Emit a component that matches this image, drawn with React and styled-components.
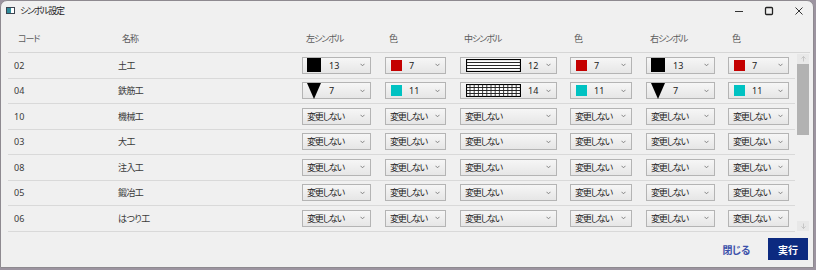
import React from "react";
import styled, { createGlobalStyle } from "styled-components";

const GlobalStyle = createGlobalStyle`
  html, body { margin: 0; padding: 0; }
  body {
    background: #9c94a0;
    font-family: "Noto Sans", "Noto Sans CJK JP", sans-serif;
    font-feature-settings: "palt";
  }
`;

const Window = styled.div`
  box-sizing: border-box;
  width: 814px;
  height: 268px;
  background: #f0f0f0;
  border: 1px solid #8e8a90;
  border-radius: 7px 7px 0 0;
  display: flex;
  flex-direction: column;
  overflow: hidden;
`;

const TitleBar = styled.div`
  height: 21px;
  display: flex;
  align-items: center;
  padding: 0 0 2px 5px;
  box-sizing: border-box;
`;

const TitleText = styled.span`
  margin-left: 5px;
  font-size: 9px;
  letter-spacing: -1.3px;
  color: #1e1e1e;
`;

const Controls = styled.div`
  margin-left: auto;
  display: flex;
  align-items: center;
  gap: 20px;
  padding-right: 9px;
`;

const Table = styled.div`
  margin: 0 3px 0 7px;
  display: flex;
  flex-direction: column;
`;

const cols = "104px 184px 83px 75px 110px 76px 82px 73px";

const HeaderRow = styled.div`
  box-sizing: border-box;
  height: 31px;
  display: grid;
  grid-template-columns: ${cols};
  align-items: center;
  padding-top: 3px;
  border-bottom: 1px solid #d6d6d6;
`;

const HeadCell = styled.div`
  padding-left: 10px;
  font-size: 9px;
  letter-spacing: -1px;
  color: #5c5c5c;
`;

const BodyWrap = styled.div`
  display: flex;
`;

const Rows = styled.div`
  width: 787px;
  display: flex;
  flex-direction: column;
`;

const Row = styled.div`
  box-sizing: border-box;
  height: 25.5px;
  display: grid;
  grid-template-columns: ${cols};
  align-items: center;
  border-bottom: 1px solid #d9d9d9;
`;

const Cell = styled.div`
  padding-left: 6px;
  font-size: 9px;
  letter-spacing: ${(p) => (p.$jp ? "-0.6px" : "0")};
  color: #3a3a3a;
  display: flex;
  align-items: center;
`;

const Combo = styled.div`
  box-sizing: border-box;
  width: ${(p) => p.$w}px;
  height: 17px;
  border: 1px solid #b4b4b4;
  background: linear-gradient(#f6f6f6, #e6e6e6);
  display: flex;
  align-items: center;
  padding: 0 5px 0 4px;
  font-size: 9px;
  color: #222;
  letter-spacing: 0;
`;

const ComboLabel = styled.span`
  letter-spacing: -1.2px;
  white-space: nowrap;
`;

const Gap = styled.span`
  display: inline-block;
  width: ${(p) => p.$w}px;
  flex: none;
`;

const ChevronWrap = styled.span`
  margin-left: auto;
  display: flex;
  align-items: center;
`;

const Swatch = styled.span`
  display: inline-block;
  width: ${(p) => p.$s}px;
  height: ${(p) => p.$s}px;
  background: ${(p) => p.$c};
  flex: none;
`;

const Scrollbar = styled.div`
  margin: 1px 0 0 2px;
  width: 12px;
  height: 177px;
  display: flex;
  flex-direction: column;
  background: #f0f0f0;
`;

const ScrollArrow = styled.div`
  height: 10px;
  background: #e8e8e8;
  display: flex;
  align-items: center;
  justify-content: center;
`;

const Thumb = styled.div`
  height: 71px;
  background: #b2b2b2;
`;

const Track = styled.div`
  flex: 1;
`;

const Footer = styled.div`
  flex: 1;
  display: flex;
  align-items: center;
  justify-content: flex-end;
  gap: 10px;
  padding-right: 5px;
`;

const LinkButton = styled.button`
  border: none;
  background: transparent;
  font-family: inherit;
  font-size: 10px;
  font-weight: 600;
  letter-spacing: -0.8px;
  color: #3d51aa;
  padding: 0 8px;
  height: 22px;
`;

const PrimaryButton = styled.button`
  border: none;
  width: 40px;
  height: 22px;
  background: #0c2a80;
  color: #fff;
  font-family: inherit;
  font-size: 10px;
  font-weight: 700;
  padding: 0;
`;

const Chevron = () => (
  <ChevronWrap>
    <svg width="5" height="4" viewBox="0 0 5 4">
      <polyline points="0.5,0.8 2.5,2.8 4.5,0.8" fill="none" stroke="#777" strokeWidth="0.9" />
    </svg>
  </ChevronWrap>
);

const Sym = ({ kind }) =>
  kind === "square" ? (
    <Swatch $s={14} $c="#000" />
  ) : (
    <svg width="14" height="16" viewBox="0 0 14 16" style={{ flex: "none" }}>
      <polygon points="0,0 14,0 7,16" fill="#000" />
    </svg>
  );

const Pattern = ({ kind }) => {
  const hs = [3.5, 6.5, 9.5];
  const vs = [];
  for (let x = 4; x < 54; x += 4.2) vs.push(x);
  return (
    <svg width="55" height="13" viewBox="0 0 55 13" style={{ flex: "none" }}>
      <rect x="0.5" y="0.5" width="54" height="12" fill="#fff" stroke="#000" strokeWidth="1.2" />
      {hs.map((y) => (
        <line key={y} x1="0.5" x2="54.5" y1={y} y2={y} stroke="#111" strokeWidth="0.9" />
      ))}
      {kind === "grid" &&
        vs.map((x) => (
          <line key={x} x1={x} x2={x} y1="0.5" y2="12.5" stroke="#222" strokeWidth="0.9" />
        ))}
    </svg>
  );
};

const Unchanged = ({ w }) => (
  <Combo $w={w}>
    <ComboLabel>変更しない</ComboLabel>
    <Chevron />
  </Combo>
);

const SymCombo = ({ w, v }) =>
  v ? (
    <Combo $w={w}>
      <Sym kind={v.sym} />
      <Gap $w={8} />
      <span>{v.n}</span>
      <Chevron />
    </Combo>
  ) : (
    <Unchanged w={w} />
  );

const ColorCombo = ({ w, v }) =>
  v ? (
    <Combo $w={w}>
      <Gap $w={1} />
      <Swatch $s={11} $c={v.color} />
      <Gap $w={7} />
      <span>{v.n}</span>
      <Chevron />
    </Combo>
  ) : (
    <Unchanged w={w} />
  );

const MidCombo = ({ w, v }) =>
  v ? (
    <Combo $w={w}>
      <Gap $w={1} />
      <Pattern kind={v.pat} />
      <Gap $w={7} />
      <span>{v.n}</span>
      <Chevron />
    </Combo>
  ) : (
    <Unchanged w={w} />
  );

const RED = "#c40000";
const CYAN = "#00c2c2";

const rows = [
  {
    code: "02",
    name: "土工",
    l: { sym: "square", n: 13 },
    lc: { color: RED, n: 7 },
    m: { pat: "h", n: 12 },
    mc: { color: RED, n: 7 },
    r: { sym: "square", n: 13 },
    rc: { color: RED, n: 7 },
  },
  {
    code: "04",
    name: "鉄筋工",
    l: { sym: "tri", n: 7 },
    lc: { color: CYAN, n: 11 },
    m: { pat: "grid", n: 14 },
    mc: { color: CYAN, n: 11 },
    r: { sym: "tri", n: 7 },
    rc: { color: CYAN, n: 11 },
  },
  { code: "10", name: "機械工" },
  { code: "03", name: "大工" },
  { code: "08", name: "注入工" },
  { code: "05", name: "鍛冶工" },
  { code: "06", name: "はつり工" },
];

const headers = ["コード", "名称", "左シンボル", "色", "中シンボル", "色", "右シンボル", "色"];

export default function App() {
  return (
    <>
      <GlobalStyle />
      <Window>
        <TitleBar>
          <svg width="9" height="7" viewBox="0 0 9 7">
            <rect x="0.5" y="0.5" width="8" height="6" fill="#fff" stroke="#3c4450" />
            <rect x="1" y="1" width="4" height="5" fill="#2f8a9a" />
          </svg>
          <TitleText>シンボル設定</TitleText>
          <Controls>
            <svg width="10" height="10" viewBox="0 0 10 10">
              <line x1="1" x2="9" y1="5.5" y2="5.5" stroke="#333" strokeWidth="1" />
            </svg>
            <svg width="10" height="10" viewBox="0 0 10 10">
              <rect x="1.5" y="1.5" width="7" height="7" rx="1" fill="none" stroke="#222" strokeWidth="1.3" />
            </svg>
            <svg width="10" height="10" viewBox="0 0 10 10">
              <path d="M1.5 1.5 L8.5 8.5 M8.5 1.5 L1.5 8.5" stroke="#333" strokeWidth="1" />
            </svg>
          </Controls>
        </TitleBar>
        <Table>
          <HeaderRow>
            {headers.map((h, i) => (
              <HeadCell key={i}>{h}</HeadCell>
            ))}
          </HeaderRow>
          <BodyWrap>
            <Rows>
              {rows.map((r) => (
                <Row key={r.code}>
                  <Cell>{r.code}</Cell>
                  <Cell $jp>{r.name}</Cell>
                  <Cell>
                    <SymCombo w={69} v={r.l} />
                  </Cell>
                  <Cell>
                    <ColorCombo w={61} v={r.lc} />
                  </Cell>
                  <Cell>
                    <MidCombo w={97} v={r.m} />
                  </Cell>
                  <Cell>
                    <ColorCombo w={62} v={r.mc} />
                  </Cell>
                  <Cell>
                    <SymCombo w={69} v={r.r} />
                  </Cell>
                  <Cell>
                    <ColorCombo w={61} v={r.rc} />
                  </Cell>
                </Row>
              ))}
            </Rows>
            <Scrollbar>
              <ScrollArrow>
                <svg width="5" height="6" viewBox="0 0 5 6">
                  <path d="M2.5 0.5 V5.5 M0.5 2.5 L2.5 0.5 L4.5 2.5" fill="none" stroke="#bdbdbd" strokeWidth="0.8" />
                </svg>
              </ScrollArrow>
              <Thumb />
              <Track />
              <ScrollArrow>
                <svg width="5" height="6" viewBox="0 0 5 6">
                  <path d="M2.5 0.5 V5.5 M0.5 3.5 L2.5 5.5 L4.5 3.5" fill="none" stroke="#bdbdbd" strokeWidth="0.8" />
                </svg>
              </ScrollArrow>
            </Scrollbar>
          </BodyWrap>
        </Table>
        <Footer>
          <LinkButton>閉じる</LinkButton>
          <PrimaryButton>実行</PrimaryButton>
        </Footer>
      </Window>
    </>
  );
}
